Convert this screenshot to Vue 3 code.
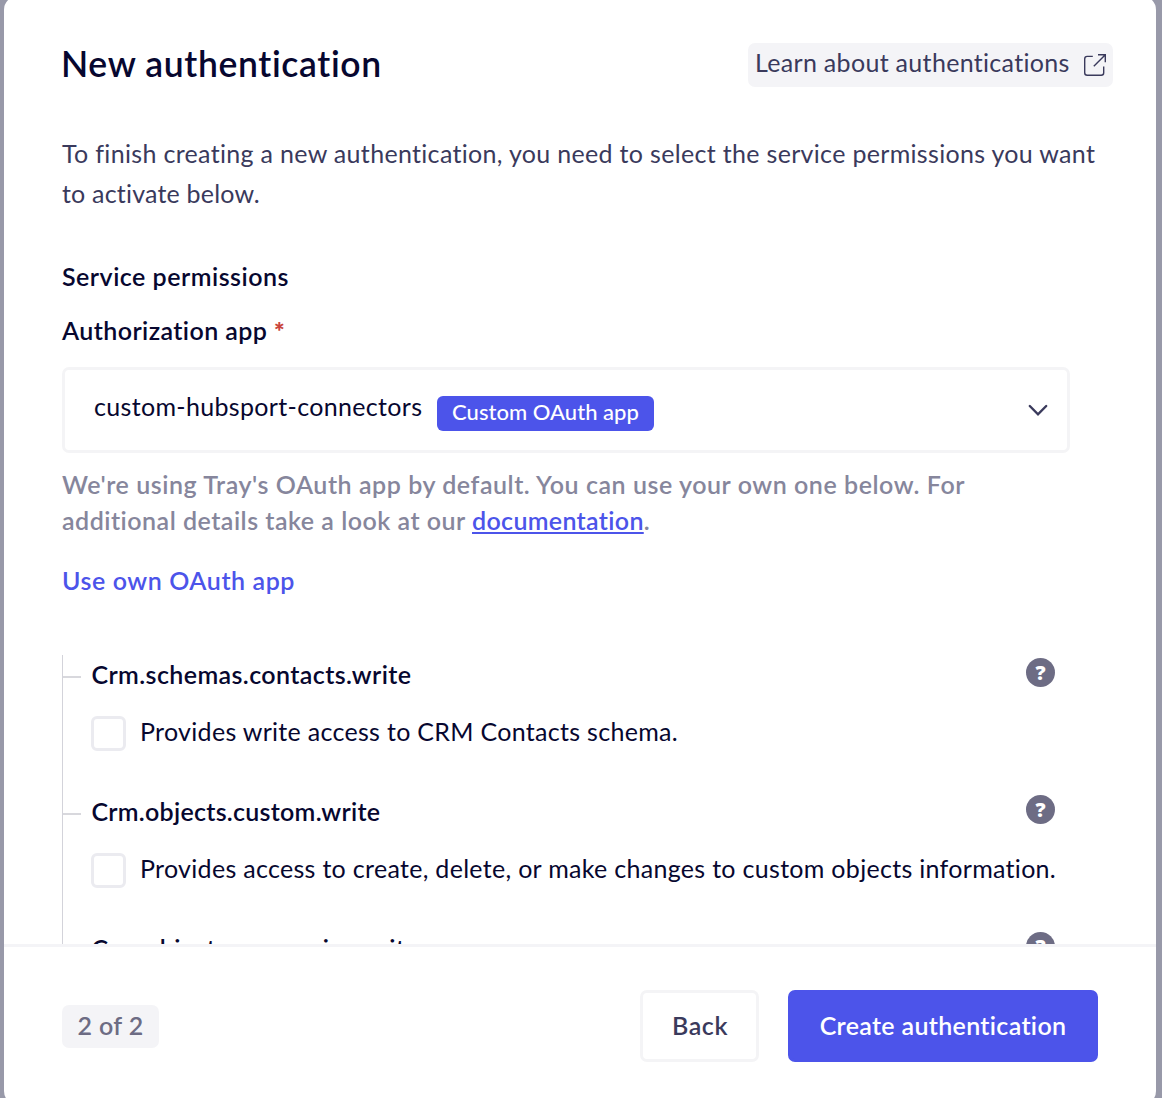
<script setup>
import { ref } from 'vue'

const scopes = ref([
  {
    name: 'Crm.schemas.contacts.write',
    description: 'Provides write access to CRM Contacts schema.',
    spacing: '0.4px',
    checked: false
  },
  {
    name: 'Crm.objects.custom.write',
    description: 'Provides access to create, delete, or make changes to custom objects information.',
    spacing: '0.27px',
    checked: false
  },
  {
    name: 'Crm.objects.companies.write',
    spacing: '0.3px',
    checked: false
  }
])
</script>

<template>
  <div class="backdrop">
    <section class="modal" role="dialog" aria-labelledby="dialog-title">
      <header class="header">
        <h1 id="dialog-title">New authentication</h1>
        <a class="learn">
          <span>Learn about authentications</span>
          <svg class="external" viewBox="0 0 24 24" aria-hidden="true">
            <path d="M9.8 3.4H4.2Q1.7 3.4 1.7 5.9V19.7Q1.7 22.2 4.2 22.2H18.2Q20.7 22.2 20.7 19.7V13.6" />
            <path d="M10.8 13.2L22.3 1.8M15 1.8H22.3V9.2" />
          </svg>
        </a>
      </header>

      <div class="content">
        <p class="intro">
          To finish creating a new authentication, you need to select the service permissions you want<br />
          <span class="intro-end">to activate below.</span>
        </p>

        <h2 class="section-title">Service permissions</h2>
        <div class="field-label">Authorization app <span class="required">*</span></div>

        <div class="select">
          <span class="select-value">custom-hubsport-connectors</span>
          <span class="badge">Custom OAuth app</span>
          <svg class="chevron" viewBox="0 0 20 14" aria-hidden="true">
            <path d="M1.8 2L10 10.4L18.2 2" />
          </svg>
        </div>

        <p class="hint">
          We're using Tray's OAuth app by default. You can use your own one below. For<br />
          <span class="hint-end">additional details take a look at our <a>documentation</a>.</span>
        </p>
        <a class="own-app">Use own OAuth app</a>

        <ul class="scopes">
          <li v-for="scope in scopes" :key="scope.name" class="scope">
            <div class="scope-head">
              <span class="scope-name" :style="{ letterSpacing: scope.spacing }">{{ scope.name }}</span>
              <span class="help">?</span>
            </div>
            <div v-if="scope.description" class="scope-option" @click="scope.checked = !scope.checked">
              <span class="checkbox" :class="{ checked: scope.checked }"></span>
              <span class="scope-text">{{ scope.description }}</span>
            </div>
          </li>
        </ul>
      </div>

      <footer class="footer">
        <span class="step">2 of 2</span>
        <div class="actions">
          <button class="btn back">Back</button>
          <button class="btn create">Create authentication</button>
        </div>
      </footer>
    </section>
  </div>
</template>

<style>
body {
  margin: 0;
  overflow: hidden;
}
</style>

<style scoped>
* {
  box-sizing: border-box;
}

.backdrop {
  height: 1098px;
  overflow: hidden;
  display: flex;
  background: #9899a9;
  font-family: Lato, "Open Sans", sans-serif;
  font-size: 25px;
  color: #07072f;
  white-space: nowrap;
}

.modal {
  width: 1152px;
  height: 1109px;
  margin: -4px 0 0 4px;
  flex: none;
  display: flex;
  flex-direction: column;
  overflow: hidden;
  background: #fff;
  border-radius: 14px;
}

.header {
  flex: none;
  display: flex;
  justify-content: space-between;
  align-items: flex-start;
  padding: 47px 43px 0 57px;
  height: 137px;
}

h1 {
  margin: 1px 0 0;
  font-size: 35.5px;
  font-weight: 600;
  line-height: 40px;
  letter-spacing: 0.65px;
}

.learn {
  display: flex;
  align-items: flex-start;
  justify-content: space-between;
  width: 365px;
  height: 44px;
  padding: 0 6px 0 7px;
  border-radius: 7px;
  background: #f4f4f7;
  color: #3a3a5c;
  line-height: 39px;
  letter-spacing: 0.31px;
}

.external {
  width: 24px;
  height: 24px;
  margin-top: 10px;
  fill: none;
  stroke: #3a3a5c;
  stroke-width: 1.4;
}

.content {
  flex: none;
  height: 811px;
  padding: 0 86px 0 58px;
  overflow: hidden;
}

.intro {
  margin: 0;
  color: #3a3a5c;
  line-height: 40px;
  letter-spacing: 0.32px;
}

.intro-end {
  letter-spacing: 0.2px;
}

.section-title {
  margin: 46px 0 0;
  font-size: 25px;
  font-weight: 600;
  line-height: 34px;
  letter-spacing: 0.5px;
}

.field-label {
  margin-top: 20px;
  font-weight: 600;
  line-height: 34px;
  letter-spacing: 0.42px;
}

.required {
  color: #c9453d;
  font-weight: 800;
}

.select {
  display: flex;
  align-items: flex-start;
  height: 86px;
  margin-top: 20px;
  padding: 20px 19px 0 29px;
  border: 3px solid #f4f4f6;
  border-radius: 7px;
}

.select-value {
  width: 343px;
  line-height: 32px;
  letter-spacing: 0.33px;
}

.badge {
  width: 217px;
  height: 35px;
  margin-top: 6px;
  border-radius: 6px;
  background: #4c54ea;
  color: #fff;
  font-size: 22px;
  font-weight: 500;
  line-height: 32px;
  text-align: center;
  letter-spacing: 0.03px;
}

.chevron {
  width: 20px;
  height: 14px;
  margin: 14px 0 0 auto;
  fill: none;
  stroke: #3a3a5c;
  stroke-width: 2.4;
  stroke-linecap: round;
}

.hint {
  margin: 13px 0 0;
  color: #86869c;
  font-weight: 600;
  line-height: 36px;
  letter-spacing: 0.55px;
}

.hint-end {
  letter-spacing: 0.5px;
}

.hint a,
.own-app {
  color: #4c54ea;
}

.hint a {
  text-decoration: underline;
  text-decoration-thickness: 2px;
  text-underline-offset: 2px;
  letter-spacing: 0.33px;
}

.own-app {
  display: block;
  margin-top: 26px;
  font-weight: 600;
  line-height: 32px;
  letter-spacing: 0.58px;
}

.scopes {
  list-style: none;
  margin: 59px 0 0;
  padding: 0;
  border-left: 1px solid #d3d3da;
}

.scope {
  position: relative;
  height: 137px;
  padding: 3px 15px 0 28px;
}

.scope::before {
  content: "";
  position: absolute;
  left: 0;
  top: 21px;
  width: 18px;
  height: 2px;
  background: #d8d8dd;
}

.scope-head {
  display: flex;
  justify-content: space-between;
  align-items: flex-start;
  height: 58px;
}

.scope-name {
  padding-left: 0.5px;
  font-weight: 600;
  line-height: 32px;
}

.help {
  width: 29px;
  height: 29px;
  border-radius: 50%;
  background: #6d6c84;
  color: #fff;
  font-family: "Open Sans", sans-serif;
  font-size: 20px;
  font-weight: 800;
  line-height: 29px;
  text-align: center;
}

.scope-option {
  display: flex;
  align-items: flex-start;
}

.checkbox {
  flex: none;
  width: 35px;
  height: 35px;
  margin-right: 14px;
  border: 3px solid #ebebf0;
  border-radius: 6px;
}

.checkbox.checked {
  background: #4c54ea;
}

.scope-text {
  line-height: 31px;
  letter-spacing: 0.3px;
}

.footer {
  flex: 1;
  display: flex;
  justify-content: space-between;
  align-items: flex-start;
  padding: 43px 58px 0;
  border-top: 3px solid #f4f4f7;
}

.step {
  width: 97px;
  height: 43px;
  margin-top: 15px;
  border-radius: 7px;
  background: #f4f4f7;
  color: #6d6c84;
  font-weight: 600;
  line-height: 40px;
  text-align: center;
  letter-spacing: 0.4px;
}

.actions {
  display: flex;
  gap: 29px;
}

.btn {
  height: 72px;
  padding: 0 0 3px;
  border: 3px solid #f4f4f6;
  border-radius: 7px;
  background: #fff;
  color: #3a3a5c;
  font-family: inherit;
  font-size: 25px;
  font-weight: 600;
  white-space: nowrap;
}

.back {
  width: 119px;
  padding-left: 1px;
  letter-spacing: 0.6px;
}

.create {
  width: 310px;
  border-color: #4c54ea;
  background: #4c54ea;
  color: #fff;
  letter-spacing: 0.33px;
}
</style>
